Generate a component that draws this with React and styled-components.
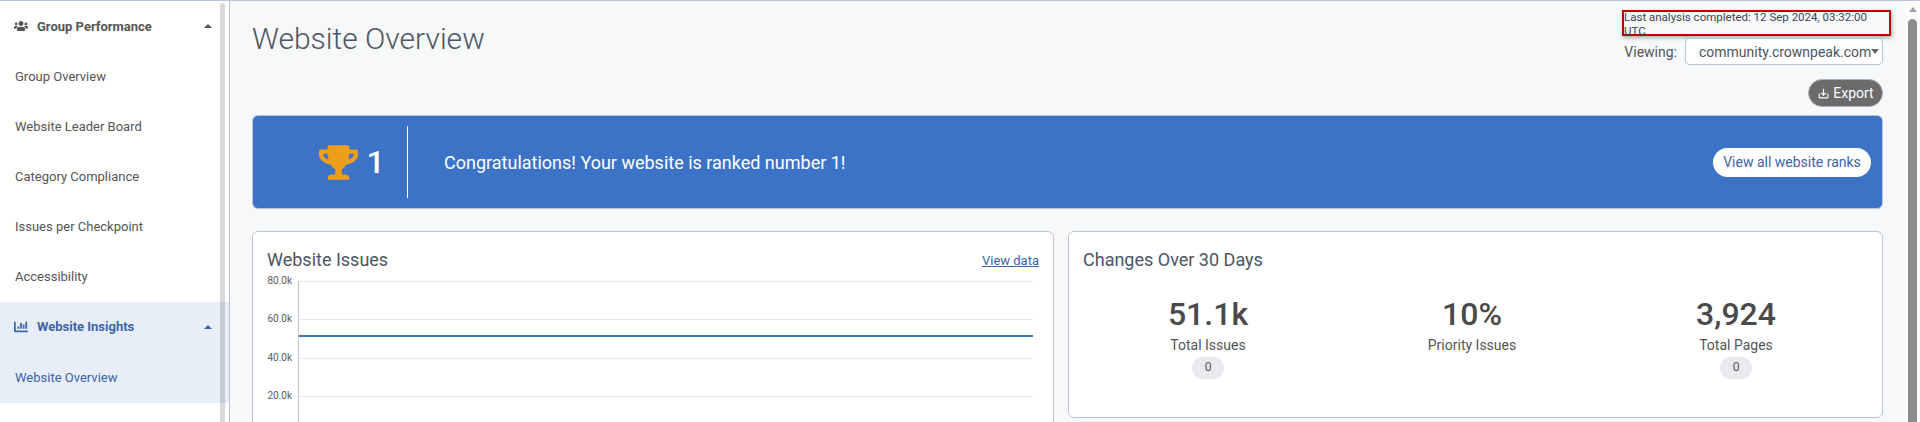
import styled, { createGlobalStyle } from "styled-components";
import { FaUsers, FaChartBar, FaTrophy } from "react-icons/fa";
import { MdSaveAlt } from "react-icons/md";

const Global = createGlobalStyle`
  html, body { margin: 0; padding: 0; height: 100%; overflow: hidden; }
  body { font-family: Roboto, "Liberation Sans", sans-serif; color: #4a4a4a; background: #f7f8fa; }
  * { box-sizing: border-box; }
`;

const Shell = styled.div`
  display: flex;
  height: 422px;
  overflow: hidden;
  border-top: 1px solid #b9c6d9;
`;

const Sidebar = styled.nav`
  position: relative;
  flex: 0 0 230px;
  background: #fff;
  border-right: 1px solid #b6c3d7;
  overflow: hidden;
`;

const SideThumb = styled.div`
  position: absolute;
  top: 2px;
  bottom: 0;
  left: 220px;
  width: 5px;
  border-radius: 3px 3px 0 0;
  background: rgba(0, 0, 0, 0.15);
`;

const Section = styled.div`
  background: ${(p) => (p.$active ? "#e8eef8" : "transparent")};
  color: ${(p) => (p.$active ? "#3c64a8" : "#555")};
  padding-bottom: ${(p) => (p.$active ? "1px" : "0")};
`;

const SectionHead = styled.div`
  display: flex;
  align-items: center;
  height: 50px;
  padding: 0 17px 0 14px;
  font-size: 13px;
  font-weight: 700;
  svg { font-size: 14px; flex: none; }
`;

const SectionLabel = styled.span`
  flex: 1;
  margin-left: 9px;
`;

const Caret = styled.i`
  width: 0;
  height: 0;
  border-left: 4px solid transparent;
  border-right: 4px solid transparent;
  border-bottom: 4px solid currentColor;
`;

const NavItem = styled.div`
  display: flex;
  align-items: center;
  height: 50.2px;
  padding-left: 15px;
  font-size: 13px;
`;

const Main = styled.main`
  flex: 1;
  min-width: 0;
  padding: 0 22px;
`;

const Header = styled.header`
  display: flex;
  justify-content: space-between;
  align-items: flex-start;
`;

const Title = styled.h1`
  margin: 21px 0 0;
  font-size: 30px;
  line-height: 34px;
  font-weight: 300;
  color: #4f5661;
`;

const HeaderTools = styled.div`
  display: flex;
  flex-direction: column;
  align-items: flex-end;
  padding-top: 9px;
`;

const Stamp = styled.div`
  display: flex;
  align-items: center;
  justify-content: flex-end;
  width: 269px;
  height: 26px;
  margin-right: -8px;
  padding: 2px 6px 0 0;
  border: 2px solid #c00000;
  box-shadow: 1px 2px 4px rgba(0, 0, 0, 0.3);
  font-size: 11.5px;
  color: #3e4450;
`;

const ViewRow = styled.div`
  display: flex;
  align-items: center;
  gap: 8px;
  margin-top: 2px;
  font-size: 14px;
  color: #555;
`;

const Select = styled.div`
  display: flex;
  align-items: center;
  justify-content: space-between;
  width: 198px;
  height: 27px;
  padding: 0 15px 0 13px;
  background: #fff;
  border: 1px solid #b9c3d3;
  border-radius: 5px;
  color: #4c5563;
`;

const DownCaret = styled.i`
  width: 0;
  height: 0;
  border-left: 4.5px solid transparent;
  border-right: 4.5px solid transparent;
  border-top: 5px solid #666;
`;

const ExportButton = styled.button`
  display: flex;
  align-items: center;
  justify-content: center;
  gap: 3px;
  width: 75px;
  height: 28px;
  margin-top: 14px;
  padding: 0;
  border: 1px solid #aab0ba;
  border-radius: 14px;
  background: #6b6b6b;
  color: #fff;
  font: 400 14px Roboto, sans-serif;
  svg { font-size: 13px; }
`;

const Banner = styled.section`
  display: flex;
  align-items: center;
  height: 94px;
  margin-top: 8px;
  padding: 0 11px 0 0;
  background: #3c73c6;
  border: 1px solid #b9c6d9;
  border-radius: 6px;
  color: #fff;
`;

const Rank = styled.div`
  display: flex;
  align-items: center;
  justify-content: center;
  gap: 8px;
  width: 155px;
  height: 72px;
  padding-left: 30px;
  border-right: 1px solid #fff;
  font-size: 32px;
  font-weight: 500;
  svg { font-size: 39px; color: #ee9e1c; margin-left: 14px; }
`;

const Congrats = styled.div`
  flex: 1;
  margin-left: 36px;
  font-size: 18px;
`;

const RanksButton = styled.button`
  width: 158px;
  height: 29px;
  padding: 0;
  border: 0;
  border-radius: 15px;
  background: #fff;
  color: #3c64a8;
  font: 400 14px Roboto, sans-serif;
`;

const Cards = styled.div`
  display: grid;
  grid-template-columns: 1fr 1fr;
  gap: 14px;
  margin-top: 22px;
`;

const Card = styled.section`
  height: 187px;
  background: #fff;
  border: 1px solid #bcc4d4;
  border-radius: 6px;
  padding: 14px 14px 0;
`;

const ChartCard = styled(Card)`
  height: 260px;
`;

const CardHead = styled.div`
  display: flex;
  justify-content: space-between;
  align-items: center;
  height: 26px;
`;

const CardTitle = styled.h2`
  margin: 0;
  font-size: 18px;
  font-weight: 400;
  color: #4c5563;
`;

const DataLink = styled.a`
  font-size: 13px;
  color: #3c64a8;
  text-decoration: underline;
  margin-top: 3px;
`;

const Chart = styled.div`
  display: grid;
  grid-template-columns: 26px 1fr;
  column-gap: 6px;
  margin: 9px 0 0 -1px;
`;

const YLabels = styled.div`
  display: flex;
  flex-direction: column;
  margin-top: -6px;
`;

const YLabel = styled.span`
  height: 38.3px;
  font-size: 10px;
  line-height: 12px;
  text-align: right;
  white-space: nowrap;
  color: #5c5c5c;
`;

const Plot = styled.div`
  position: relative;
  height: 180px;
  margin-right: 6px;
  border-left: 1px solid #b9c3d3;
`;

const GridLine = styled.div`
  height: 38.3px;
  border-top: 1px solid #e8e9ec;
`;

const SeriesLine = styled.div`
  position: absolute;
  top: 54px;
  left: 0;
  right: 0;
  height: 2px;
  background: #3c73c6;
`;

const Stats = styled.div`
  display: grid;
  grid-template-columns: repeat(3, 264px);
  margin: 23px 0 0 -7px;
`;

const Stat = styled.div`
  display: flex;
  flex-direction: column;
  align-items: center;
`;

const StatValue = styled.div`
  font-size: 32px;
  line-height: 38px;
  font-weight: 500;
  color: #4a4a4a;
`;

const StatLabel = styled.div`
  margin-top: 4px;
  font-size: 14px;
  line-height: 17px;
  color: #555;
`;

const Delta = styled.div`
  width: 32px;
  height: 22px;
  margin-top: 3px;
  border-radius: 11px;
  background: #e9e9ee;
  font-size: 12px;
  line-height: 20px;
  text-align: center;
  color: #555;
`;

const ScrollTrack = styled.div`
  flex: 0 0 15px;
  display: flex;
  flex-direction: column;
  align-items: center;
  background: #fcfcfc;
  padding: 6px 0 0 0;
`;

const ScrollArrow = styled.i`
  width: 0;
  height: 0;
  border-left: 4.5px solid transparent;
  border-right: 4.5px solid transparent;
  border-bottom: 5px solid #a0a0a0;
`;

const ScrollThumb = styled.div`
  flex: 1;
  width: 9px;
  margin-top: 7px;
  border-radius: 5px 5px 0 0;
  background: #8c8c8c;
`;

const groupItems = ["Group Overview", "Website Leader Board", "Category Compliance", "Issues per Checkpoint", "Accessibility"];
const ticks = ["80.0k", "60.0k", "40.0k", "20.0k"];
const stats = [
  { value: "51.1k", label: "Total Issues", delta: "0" },
  { value: "10%", label: "Priority Issues" },
  { value: "3,924", label: "Total Pages", delta: "0" },
];

export default function App() {
  return (
    <Shell>
      <Global />
      <Sidebar>
        <Section>
          <SectionHead>
            <FaUsers />
            <SectionLabel>Group Performance</SectionLabel>
            <Caret />
          </SectionHead>
          {groupItems.map((item) => (
            <NavItem key={item}>{item}</NavItem>
          ))}
        </Section>
        <Section $active>
          <SectionHead>
            <FaChartBar />
            <SectionLabel>Website Insights</SectionLabel>
            <Caret />
          </SectionHead>
          <NavItem>Website Overview</NavItem>
        </Section>
        <SideThumb />
      </Sidebar>
      <Main>
        <Header>
          <Title>Website Overview</Title>
          <HeaderTools>
            <Stamp>Last analysis completed: 12 Sep 2024, 03:32:00 UTC</Stamp>
            <ViewRow>
              Viewing:
              <Select>
                community.crownpeak.com
                <DownCaret />
              </Select>
            </ViewRow>
            <ExportButton>
              <MdSaveAlt />
              Export
            </ExportButton>
          </HeaderTools>
        </Header>
        <Banner>
          <Rank>
            <FaTrophy />1
          </Rank>
          <Congrats>Congratulations! Your website is ranked number 1!</Congrats>
          <RanksButton>View all website ranks</RanksButton>
        </Banner>
        <Cards>
          <ChartCard>
            <CardHead>
              <CardTitle>Website Issues</CardTitle>
              <DataLink>View data</DataLink>
            </CardHead>
            <Chart>
              <YLabels>
                {ticks.map((t) => (
                  <YLabel key={t}>{t}</YLabel>
                ))}
              </YLabels>
              <Plot>
                {ticks.map((t) => (
                  <GridLine key={t} />
                ))}
                <SeriesLine />
              </Plot>
            </Chart>
          </ChartCard>
          <Card>
            <CardHead>
              <CardTitle>Changes Over 30 Days</CardTitle>
            </CardHead>
            <Stats>
              {stats.map((s) => (
                <Stat key={s.label}>
                  <StatValue>{s.value}</StatValue>
                  <StatLabel>{s.label}</StatLabel>
                  {s.delta && <Delta>{s.delta}</Delta>}
                </Stat>
              ))}
            </Stats>
          </Card>
        </Cards>
      </Main>
      <ScrollTrack>
        <ScrollArrow />
        <ScrollThumb />
      </ScrollTrack>
    </Shell>
  );
}
